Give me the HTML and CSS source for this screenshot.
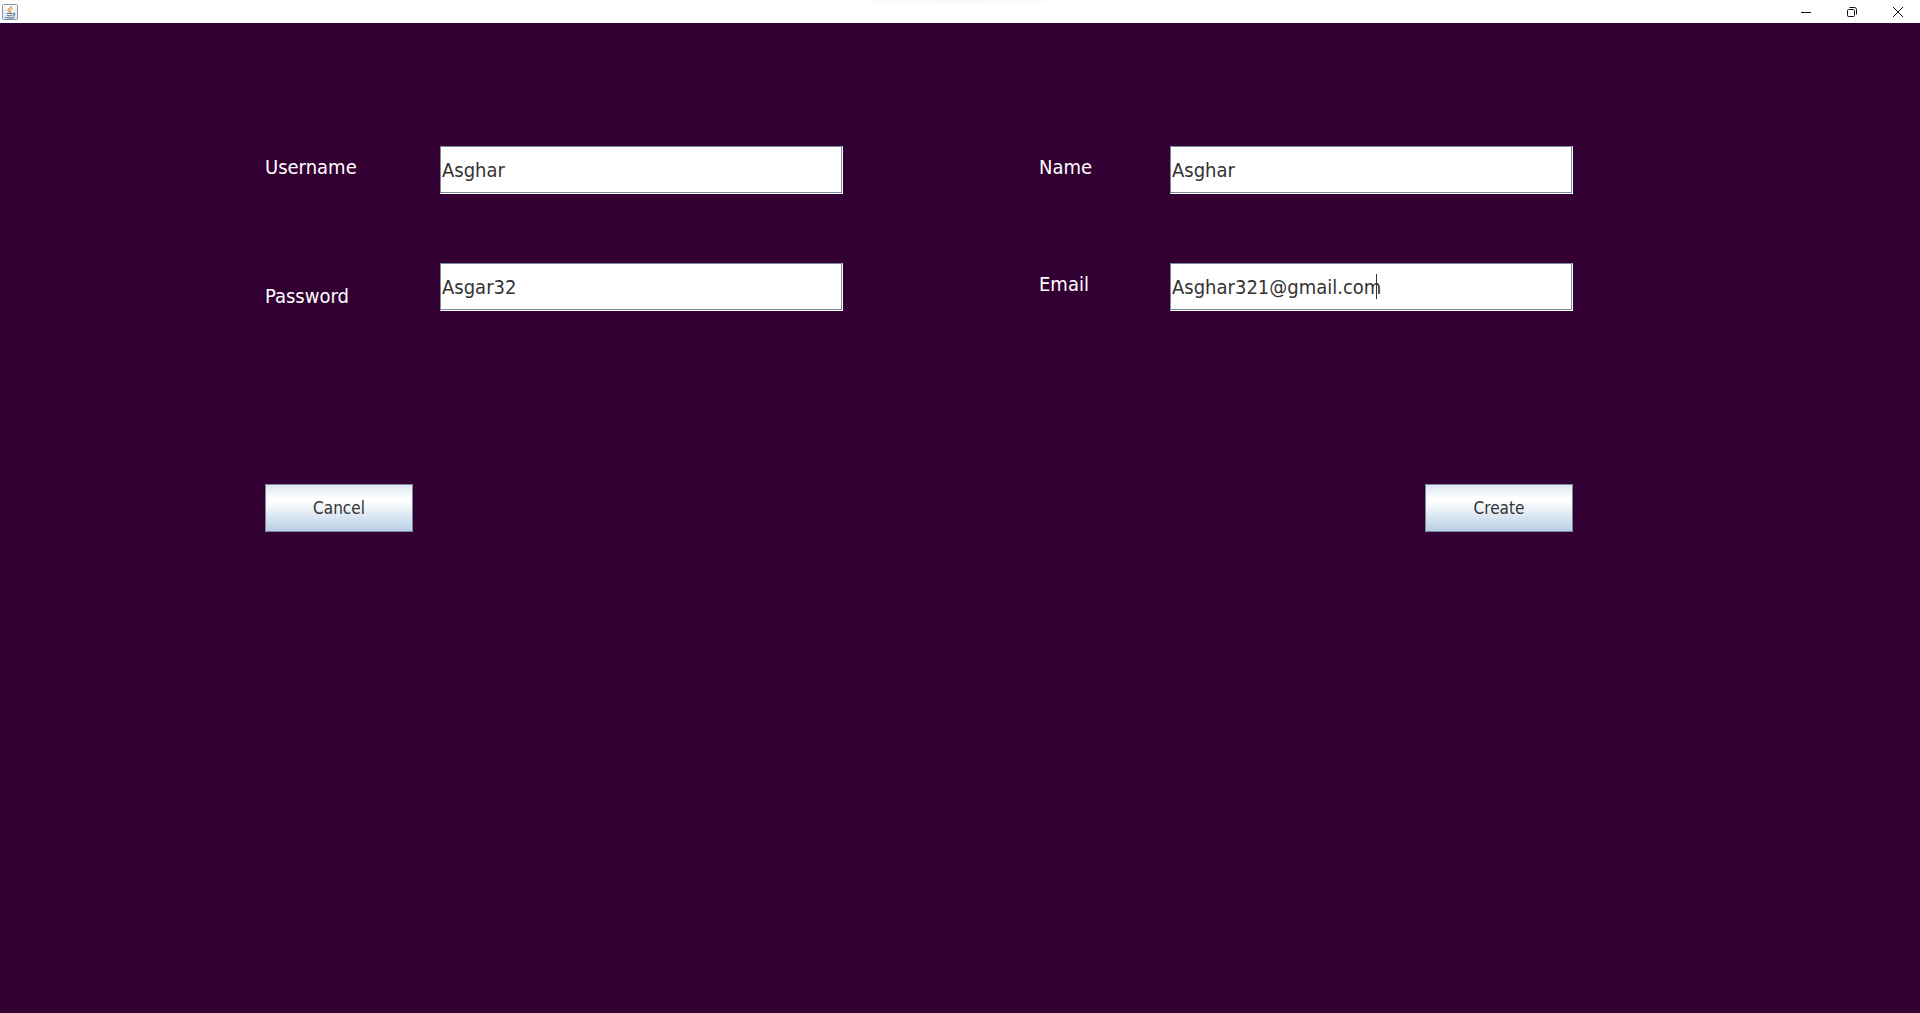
FILE: index.html
```html
<!DOCTYPE html>
<html lang="en">
<head>
<meta charset="utf-8">
<title>Create account</title>
<link rel="stylesheet" href="styles.css">
</head>
<body>
<header class="titlebar">
  <svg class="app-icon" width="16" height="16" viewBox="0 0 16 16" aria-hidden="true">
    <defs><linearGradient id="tile" x1="0" y1="0" x2="0" y2="1"><stop offset="0" stop-color="#fdfdfd"/><stop offset="1" stop-color="#dde5ec"/></linearGradient></defs>
    <rect x="0.5" y="0.5" width="15" height="15" rx="1" fill="url(#tile)" stroke="#8097ad"/>
    <path d="M9.5 2C9.8 4 5.6 4.600 6 6.300C6.200 7.200 7.300 7.700 7.500 8.700M10.600 4.500C8.600 5.300 7.800 6 8.300 6.900C8.700 7.500 8.800 8 8.200 8.700" fill="none" stroke="#e79a48" stroke-width="1.200"/>
    <path d="M4.500 9.500H10.700M5 11.200C6.500 11.800 9 11.800 10.300 11.200M3.300 13.200C6 14.200 10.500 14.100 12.500 13M11 9.400C13.500 8.800 13.500 11 11 11.500" fill="none" stroke="#58799b" stroke-width="1.100"/>
  </svg>
  <div class="window-controls">
    <button type="button" class="window-button" aria-label="Minimize">
      <svg width="10" height="10" viewBox="0 0 10 10"><path d="M0 5.500H10"/></svg>
    </button>
    <button type="button" class="window-button" aria-label="Restore">
      <svg width="10" height="10" viewBox="0 0 10 10"><rect x="0.500" y="2.500" width="7" height="7" rx="1"/><path d="M2.500 0.500H7.500Q9.500 0.500 9.500 2.500V7.500"/></svg>
    </button>
    <button type="button" class="window-button" aria-label="Close">
      <svg width="10" height="10" viewBox="0 0 10 10"><path d="M0 0L10 10M10 0L0 10"/></svg>
    </button>
  </div>
</header>
<main>
  <form class="account-form" autocomplete="off">
    <div class="field">
      <label for="username">Username</label>
      <div class="control"><input id="username" type="text" value="Asghar"></div>
    </div>
    <div class="field narrow">
      <label for="name">Name</label>
      <div class="control"><input id="name" type="text" value="Asghar"></div>
    </div>
    <div class="field lowered">
      <label for="password">Password</label>
      <div class="control"><input id="password" type="text" value="Asgar32"></div>
    </div>
    <div class="field narrow">
      <label for="email">Email</label>
      <div class="control"><input id="email" type="text" value="Asghar321@gmail.com"><span class="caret"></span></div>
    </div>
    <div class="actions">
      <button type="button" class="action">Cancel</button>
      <button type="submit" class="action">Create</button>
    </div>
  </form>
</main>
</body>
</html>
```
FILE: styles.css
```css
* { box-sizing: border-box; }

body {
  margin: 0;
  min-height: 100vh;
  background: #330033;
  font-family: "DejaVu Sans Condensed", "DejaVu Sans", sans-serif;
  font-stretch: condensed;
}

.titlebar {
  display: flex;
  align-items: center;
  justify-content: space-between;
  height: 23px;
  padding-left: 2px;
  background: radial-gradient(ellipse 120px 5px at 50% 0, #f5f5f5, #ffffff);
}

.app-icon { display: block; }

.window-controls {
  display: flex;
  height: 20px;
}

.window-button {
  display: flex;
  align-items: center;
  justify-content: center;
  width: 46px;
  padding: 0 0 0 2px;
  border: 0;
  background: none;
}

.window-button svg {
  fill: none;
  stroke: #111111;
  stroke-width: 1;
}

main { padding: 123px 347px 0 265px; }

.account-form {
  display: grid;
  grid-template-columns: 578fr 534fr;
  gap: 69px 196px;
}

.field { display: flex; }

label {
  flex: none;
  width: 175px;
  padding-top: 8px;
  color: #ffffff;
  font-size: 20px;
  line-height: 26px;
}

.narrow label { width: 131px; }

.lowered label { padding-top: 20px; }

.control {
  position: relative;
  flex: 1;
  min-width: 0;
  height: 48px;
  border: 1px solid #7a8a99;
  border-right-color: #ffffff;
  border-bottom-color: #ffffff;
}

input {
  display: block;
  width: 100%;
  height: 100%;
  padding: 0 1px;
  border: 0 solid #7a8a99;
  border-width: 0 1px 1px 0;
  border-radius: 0;
  outline: 0;
  background: #ffffff;
  color: #333333;
  font: inherit;
  font-size: 20px;
}

.caret {
  position: absolute;
  top: 10px;
  left: 205px;
  width: 1px;
  height: 25px;
  background: #333333;
}

.actions {
  grid-column: 1 / -1;
  display: flex;
  justify-content: space-between;
  padding-top: 104px;
}

.action {
  width: 148px;
  height: 48px;
  padding: 0;
  border: 1px solid #7a8a99;
  border-radius: 0;
  background: linear-gradient(#dde8f3 0%, #ffffff 30%, #ffffff 35%, #b8cfe5 100%);
  color: #333333;
  font: inherit;
  font-size: 17px;
}
```
